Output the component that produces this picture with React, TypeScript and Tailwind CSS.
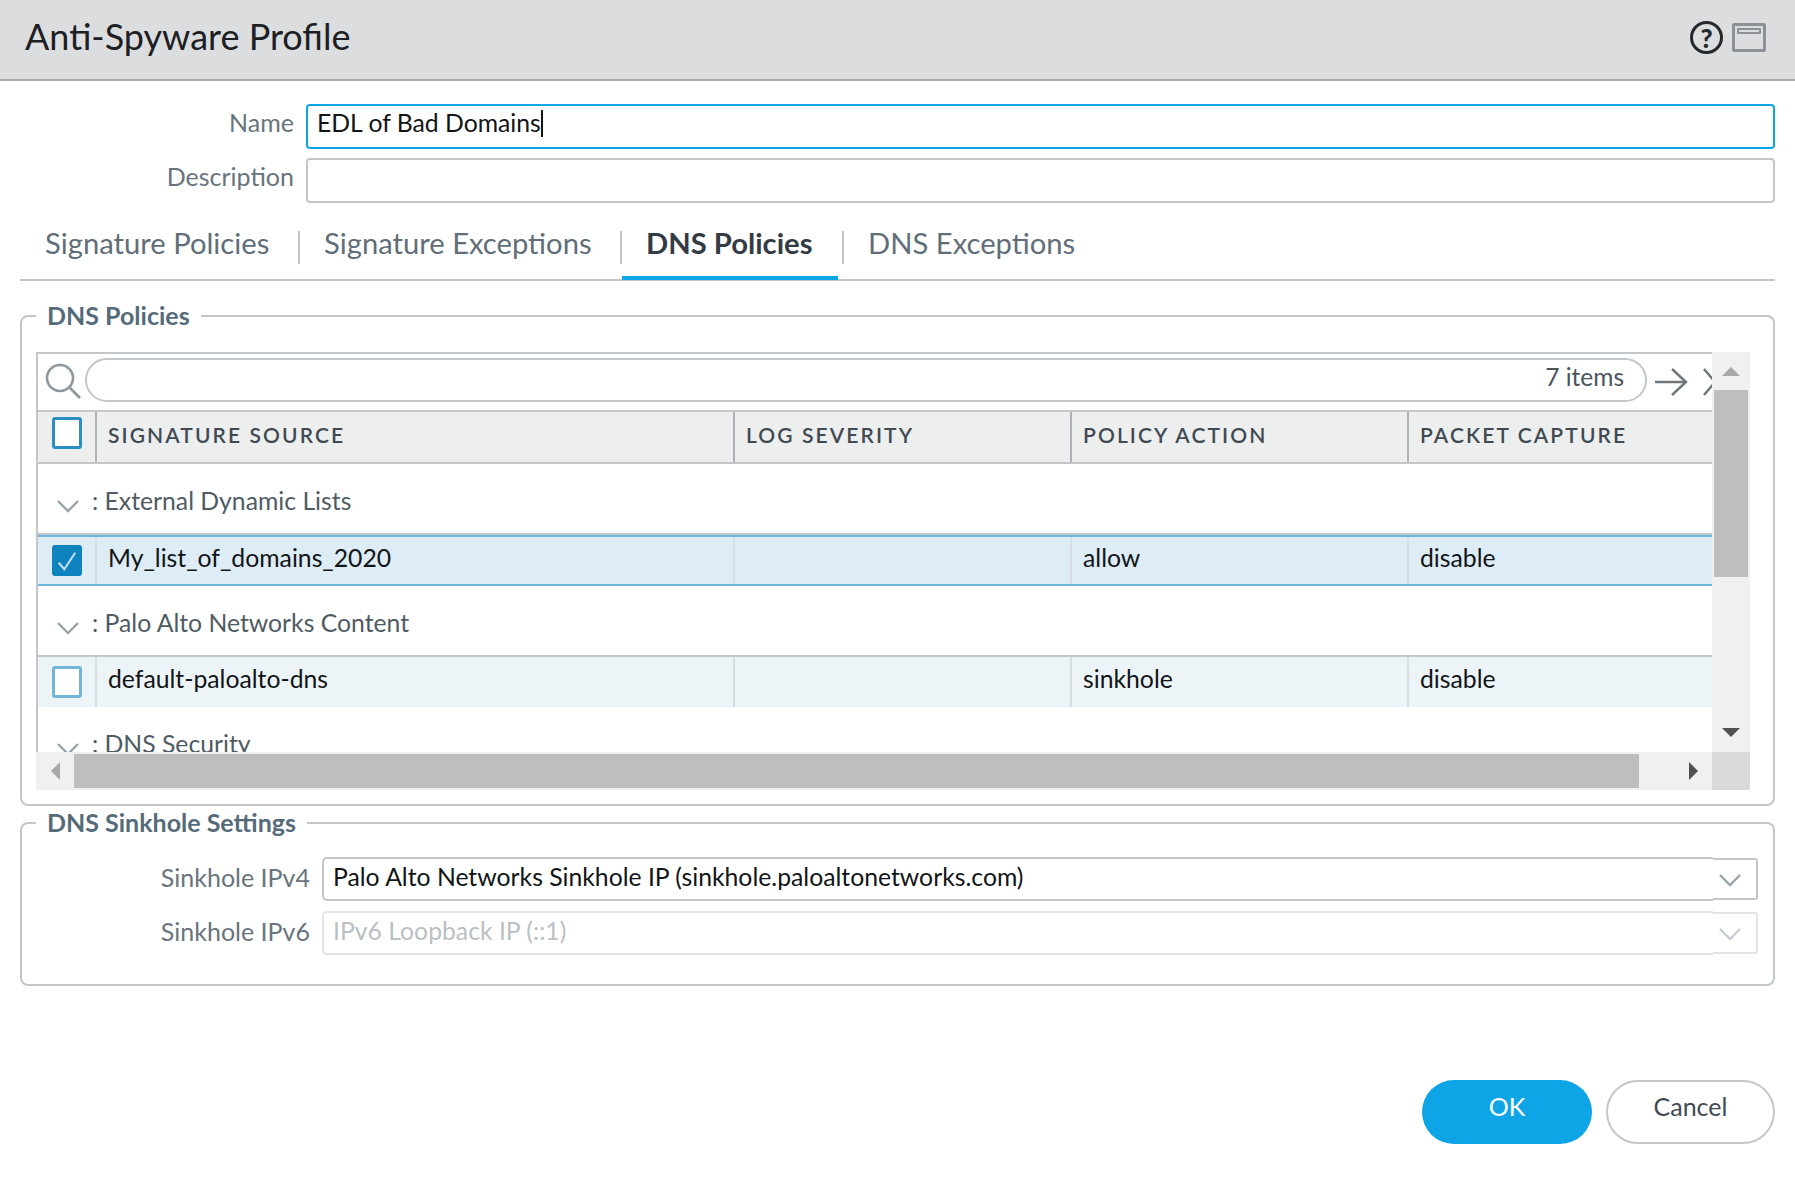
const columns = [
  { label: 'SIGNATURE SOURCE', width: 'w-[638px]' },
  { label: 'LOG SEVERITY', width: 'w-[337px]' },
  { label: 'POLICY ACTION', width: 'w-[337px]' },
  { label: 'PACKET CAPTURE', width: 'flex-1' },
];

function Chevron({ className }: { className: string }) {
  return (
    <svg viewBox="0 0 22 14" className={className} fill="none" stroke="currentColor" strokeWidth="2.4">
      <path d="M1 2l10 10L21 2" />
    </svg>
  );
}

function Checkbox({ checked, light }: { checked?: boolean; light?: boolean }) {
  if (checked) {
    return (
      <div className="w-[30px] h-[31px] rounded-[3px] bg-[#0f83bd] flex items-center justify-center">
        <svg viewBox="0 0 24 24" className="w-[22px] h-[22px]" fill="none" stroke="#b9dff1" strokeWidth="2.4">
          <path d="M3 14l6 7L21 3" />
        </svg>
      </div>
    );
  }
  return (
    <div className={`w-[30px] h-[32px] rounded-[3px] border-[3px] bg-white ${light ? 'border-[#71b6d9]' : 'border-[#2b8fc3]'}`} />
  );
}

function GroupRow({ label, className }: { label: string; className: string }) {
  return (
    <div className={`flex items-start shrink-0 ${className}`}>
      <Chevron className="w-[22px] h-[14px] ml-[19px] mt-[35px] text-[#9aa3a9]" />
      <span className="ml-[13px] mt-[19px] text-[24.75px] leading-[36px] text-[#4f5b64]">{label}</span>
    </div>
  );
}

function DataRow({ name, action, selected }: { name: string; action: string; selected?: boolean }) {
  const pad = selected ? 'pb-[5px]' : 'pb-[7px]';
  return (
    <div
      className={`flex shrink-0 text-[24.75px] text-[#111518] ${
        selected
          ? 'h-[51px] bg-[#deecf5] border-y-2 border-[#6db6dc]'
          : 'h-[52px] bg-[#ecf4f7] border-t-2 border-[#c3c7ca]'
      }`}
    >
      <div className="w-[57px] flex items-center justify-center">
        <Checkbox checked={selected} light={!selected} />
      </div>
      <div className={`w-[638px] border-l-2 border-[#d6dee3] flex items-center pl-[11px] ${pad}`}>{name}</div>
      <div className="w-[337px] border-l-2 border-[#d6dee3]" />
      <div className={`w-[337px] border-l-2 border-[#d6dee3] flex items-center pl-[11px] ${pad}`}>{action}</div>
      <div className={`flex-1 border-l-2 border-[#d6dee3] flex items-center pl-[11px] ${pad}`}>disable</div>
    </div>
  );
}

function PolicyTable() {
  return (
    <div className="w-[1714px] h-[438px] grid grid-cols-[1676px_38px] grid-rows-[400px_38px]">
      <div className="flex flex-col overflow-hidden border-l-2 border-t-2 border-[#c3c7ca]">
        {/* search bar */}
        <div className="h-[56px] shrink-0 flex items-start overflow-hidden">
          <svg viewBox="0 0 36 36" className="w-[36px] h-[36px] ml-[7px] mt-[9px] shrink-0" fill="none" stroke="#8e979d" strokeWidth="2.6">
            <circle cx="15" cy="15" r="13" />
            <path d="M25 25l10 10" />
          </svg>
          <div className="ml-[4px] mt-[4px] w-[1562px] h-[44px] shrink-0 rounded-full border-2 border-[#c3c7ca] flex items-center justify-end pr-[21px] pb-[5px] text-[24.5px] text-[#4a555e]">
            7 items
          </div>
          <svg viewBox="0 0 34 30" className="w-[34px] h-[30px] ml-[7px] mt-[13px] shrink-0" fill="none" stroke="#6f777c" strokeWidth="2.4">
            <path d="M1 15h31M18 2l14 13-14 13" />
          </svg>
          <svg viewBox="0 0 12 30" className="w-[12px] h-[30px] ml-[15px] mt-[13px] shrink-0" fill="none" stroke="#6f777c" strokeWidth="2.4">
            <path d="M1 2l11 13L1 28" />
          </svg>
        </div>
        {/* header */}
        <div className="h-[54px] shrink-0 flex bg-[#edeeee] border-y-2 border-[#c3c7ca]">
          <div className="w-[57px] flex items-center justify-center pb-[9px]">
            <Checkbox />
          </div>
          {columns.map(c => (
            <div
              key={c.label}
              className={`${c.width} border-l-2 border-[#abb1b5] flex items-center pl-[11px] pb-[5px] text-[21px] font-semibold tracking-[0.1em] text-[#3f4a53]`}
            >
              {c.label}
            </div>
          ))}
        </div>
        <GroupRow label=": External Dynamic Lists" className="h-[69px]" />
        <div className="h-[2px] shrink-0 bg-[#c3c7ca]" />
        <DataRow name="My_list_of_domains_2020" action="allow" selected />
        <GroupRow label=": Palo Alto Networks Content" className="h-[69px]" />
        <DataRow name="default-paloalto-dns" action="sinkhole" />
        <GroupRow label=": DNS Security" className="h-[68px]" />
      </div>
      {/* vertical scrollbar */}
      <div className="bg-[#f0f0f0] flex flex-col items-center">
        <div className="h-[38px] w-full flex items-center justify-center">
          <div className="w-0 h-0 border-x-[9px] border-x-transparent border-b-[9px] border-b-[#a8a8a8]" />
        </div>
        <div className="h-[187px] w-[34px] bg-[#bebebe]" />
        <div className="flex-1" />
        <div className="h-[24px] w-full flex items-start justify-center">
          <div className="w-0 h-0 border-x-[9px] border-x-transparent border-t-[9px] border-t-[#505050]" />
        </div>
      </div>
      {/* horizontal scrollbar */}
      <div className="bg-[#f0f0f0] flex items-center">
        <div className="w-[38px] flex items-center justify-center">
          <div className="w-0 h-0 border-y-[9px] border-y-transparent border-r-[9px] border-r-[#a8a8a8]" />
        </div>
        <div className="w-[1565px] h-[34px] bg-[#bebebe]" />
        <div className="flex-1 flex items-center justify-end pr-[14px]">
          <div className="w-0 h-0 border-y-[9px] border-y-transparent border-l-[9px] border-l-[#505050]" />
        </div>
      </div>
      <div className="bg-[#d9d9d9]" />
    </div>
  );
}

function SelectRow({ label, value, disabled }: { label: string; value: string; disabled?: boolean }) {
  const line = disabled ? 'border-[#e2e4e6]' : 'border-[#c3c7ca]';
  return (
    <div className="flex items-center h-[44px]">
      <span className="w-[287px] pr-[12px] text-right text-[25px] text-[#68747d] pb-[2px]">{label}</span>
      <div className={`w-[1391px] h-full rounded-l-[5px] border-y-2 border-l-2 ${line} flex items-center pl-[9px] pb-[4px] text-[24.75px] ${disabled ? 'text-[#b9bfc4]' : 'text-[#111518]'}`}>
        {value}
      </div>
      <div className={`w-[45px] h-[42px] rounded-r-[3px] border-y-2 border-r-2 ${line} flex items-center justify-center pr-[9px] pt-[2px]`}>
        <Chevron className={`w-[22px] h-[14px] ${disabled ? 'text-[#c9ced2]' : 'text-[#9aa3a9]'}`} />
      </div>
    </div>
  );
}

const tabs = [
  { label: 'Signature Policies', className: 'w-[280px] pl-[25px]' },
  { label: 'Signature Exceptions', className: 'w-[322px] pl-[24px]' },
  { label: 'DNS Policies', className: 'w-[222px] pl-[24px]', active: true },
  { label: 'DNS Exceptions', className: 'pl-[24px]' },
];

export default function App() {
  return (
    <div className="w-[1795px] h-[1179px] bg-white flex flex-col font-['Lato',sans-serif] overflow-hidden">
      <div className="h-[81px] shrink-0 bg-[#dcdddf] border-b-2 border-[#a7abae] flex items-center justify-between pl-[25px] pr-[29px]">
        <h1 className="text-[36px] text-[#1c2024] pb-[7px]">Anti-Spyware Profile</h1>
        <div className="flex items-center gap-[9px] pb-[4px]">
          <div className="w-[33px] h-[33px] rounded-full border-[3px] border-[#23282c] flex items-center justify-center text-[26px] font-black leading-none text-[#23282c]">?</div>
          <div className="w-[34px] h-[29px] border-[3px] border-[#8b9196] rounded-[2px] pt-[2px] px-[2px]">
            <div className="h-[6px] border-2 border-[#8b9196] rounded-[1px]" />
          </div>
        </div>
      </div>

      <div className="flex flex-col pl-[20px] pr-[20px]">
        {/* name + description */}
        <div className="flex items-center h-[45px] mt-[23px]">
          <label className="w-[274px] text-right text-[25px] text-[#68747d] pb-[7px]">Name</label>
          <div className="ml-[12px] flex-1 h-[45px] rounded-[4px] border-2 border-[#0ea5e6] flex items-center pl-[9px] pb-[7px] text-[24.75px] text-[#111518]">
            EDL of Bad Domains
            <span className="w-[2px] h-[27px] bg-[#111518]" />
          </div>
        </div>
        <div className="flex items-center h-[45px] mt-[9px]">
          <label className="w-[274px] text-right text-[25px] text-[#68747d] pb-[7px]">Description</label>
          <div className="ml-[12px] flex-1 h-[45px] rounded-[4px] border-2 border-[#c3c7ca]" />
        </div>

        {/* tabs */}
        <div className="flex h-[78px] border-b-2 border-[#c3c7ca]">
          {tabs.map((t, i) => (
            <div key={t.label} className={`relative h-[76px] flex items-center pt-[3px] shrink-0 ${t.className}`}>
              <span className={`text-[29.2px] ${t.active ? 'font-bold text-[#333c44]' : 'text-[#5f6e78]'}`}>{t.label}</span>
              {i < tabs.length - 1 && <span className="absolute right-0 top-[28px] h-[33px] w-[2px] bg-[#c3c7ca]" />}
              {t.active && <span className="absolute left-0 right-[6px] bottom-[-1px] h-[4px] bg-[#0ea5e6]" />}
            </div>
          ))}
        </div>

        {/* dns policies */}
        <fieldset className="h-[506px] mt-[19px] border-2 border-[#c3c7ca] rounded-[8px]">
          <legend className="ml-[14px] px-[11px] h-[32px] leading-[30px] text-[25px] font-bold text-[#566b7a]">DNS Policies</legend>
          <div className="mt-[20px] pl-[14px]">
            <PolicyTable />
          </div>
        </fieldset>

        {/* sinkhole */}
        <fieldset className="h-[179px] mt-[1px] border-2 border-[#c3c7ca] rounded-[8px]">
          <legend className="ml-[14px] px-[11px] h-[32px] leading-[30px] text-[25px] font-bold text-[#566b7a]">DNS Sinkhole Settings</legend>
          <div className="mt-[18px] flex flex-col gap-[10px] pl-[13px]">
            <SelectRow label="Sinkhole IPv4" value="Palo Alto Networks Sinkhole IP (sinkhole.paloaltonetworks.com)" />
            <SelectRow label="Sinkhole IPv6" value="IPv6 Loopback IP (::1)" disabled />
          </div>
        </fieldset>

        {/* footer */}
        <div className="flex justify-end gap-[14px] mt-[94px]">
          <button className="w-[170px] h-[64px] rounded-full bg-[#0ea5e6] text-white text-[25px] pb-[10px]">OK</button>
          <button className="w-[169px] h-[64px] rounded-full border-2 border-[#c3c7ca] text-[#3f4a53] text-[25px] pb-[10px]">Cancel</button>
        </div>
      </div>
    </div>
  );
}
